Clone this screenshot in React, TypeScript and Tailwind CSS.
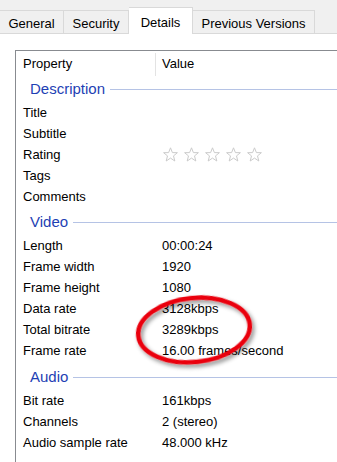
import React from 'react';

type Row = { label: string; value?: string; stars?: boolean };

interface Group {
  title: string;
  gap: string;
  rows: Row[];
}

const groups: Group[] = [
  {
    title: 'Description',
    gap: 'mt-0',
    rows: [
      { label: 'Title' },
      { label: 'Subtitle' },
      { label: 'Rating', stars: true },
      { label: 'Tags' },
      { label: 'Comments' },
    ],
  },
  {
    title: 'Video',
    gap: 'mt-[3px]',
    rows: [
      { label: 'Length', value: '00:00:24' },
      { label: 'Frame width', value: '1920' },
      { label: 'Frame height', value: '1080' },
      { label: 'Data rate', value: '3128kbps' },
      { label: 'Total bitrate', value: '3289kbps' },
      { label: 'Frame rate', value: '16.00 frames/second' },
    ],
  },
  {
    title: 'Audio',
    gap: 'mt-[4px]',
    rows: [
      { label: 'Bit rate', value: '161kbps' },
      { label: 'Channels', value: '2 (stereo)' },
      { label: 'Audio sample rate', value: '48.000 kHz' },
    ],
  },
];

function Star() {
  return (
    <svg width="15" height="15" viewBox="0 0 15 15">
      <polygon
        points="7.5,0.8 9.4,5.6 14.4,5.7 10.5,8.9 11.8,14 7.5,11.1 3.2,14 4.5,8.9 0.6,5.7 5.6,5.6"
        fill="#ffffff"
        stroke="#cbcbcb"
        strokeWidth="1"
        strokeLinejoin="round"
      />
    </svg>
  );
}

function Tab({ label, width, selected }: { label: string; width: string; selected?: boolean }) {
  if (selected) {
    return (
      <div
        className={`${width} relative z-10 -mb-px flex h-[27px] items-start justify-center border-r border-t border-[#d9d9d9] bg-white pt-[5px]`}
      >
        {label}
      </div>
    );
  }
  return (
    <div
      className={`${width} flex h-[23px] items-center justify-center border-r border-t border-[#d9d9d9] bg-[#f0f0f0] pt-[4px]`}
    >
      {label}
    </div>
  );
}

export default function App() {
  return (
    <div
      className="relative h-[462px] w-[337px] overflow-hidden bg-white text-[13px] text-black"
      style={{ fontFamily: '"Liberation Sans", Arial, sans-serif' }}
    >
      {/* tab strip */}
      <div className="flex h-[34px] items-end border-b border-[#d9d9d9] bg-[#f0f0f0]">
        <Tab label="General" width="w-[64px]" />
        <Tab label="Security" width="w-[65px]" />
        <Tab label="Details" width="w-[64px]" selected />
        <Tab label="Previous Versions" width="w-[122px]" />
      </div>

      {/* property list */}
      <div className="pt-[16px]">
        <div className="ml-[15px] h-[420px] border-l border-t border-[#888b90]">
          <div className="flex h-[26px] items-center">
            <div className="w-[139px] pl-[7px]">Property</div>
            <div className="h-[23px] w-px bg-[#e3e3e3]" />
            <div className="pl-[6px]">Value</div>
          </div>

          {groups.map((g) => (
            <div key={g.title} className={g.gap}>
              <div className="flex h-[25px] items-center pl-[14px]">
                <span className="text-[15px] text-[#1e3fb4]">{g.title}</span>
                <div className="ml-[5px] h-px flex-1 bg-[#b5c3e5]" />
              </div>
              {g.rows.map((r) => (
                <div key={r.label} className="flex h-[21px] items-center">
                  <div className="w-[146px] pl-[7px]">{r.label}</div>
                  {r.stars ? (
                    <div className="ml-px flex gap-[6px]">
                      <Star />
                      <Star />
                      <Star />
                      <Star />
                      <Star />
                    </div>
                  ) : (
                    <div>{r.value}</div>
                  )}
                </div>
              ))}
            </div>
          ))}
        </div>
      </div>

      {/* red annotation ring */}
      <svg className="pointer-events-none absolute left-[120px] top-[280px]" width="170" height="110">
        <defs>
          <filter id="ring-shadow" x="-20%" y="-20%" width="140%" height="150%">
            <feDropShadow dx="2" dy="3" stdDeviation="2" floodColor="#000" floodOpacity="0.45" />
          </filter>
        </defs>
        <ellipse
          cx="74"
          cy="50"
          rx="56"
          ry="32"
          transform="rotate(-6 74 50)"
          fill="none"
          stroke="#ea0010"
          strokeWidth="4.5"
          filter="url(#ring-shadow)"
        />
      </svg>
    </div>
  );
}
